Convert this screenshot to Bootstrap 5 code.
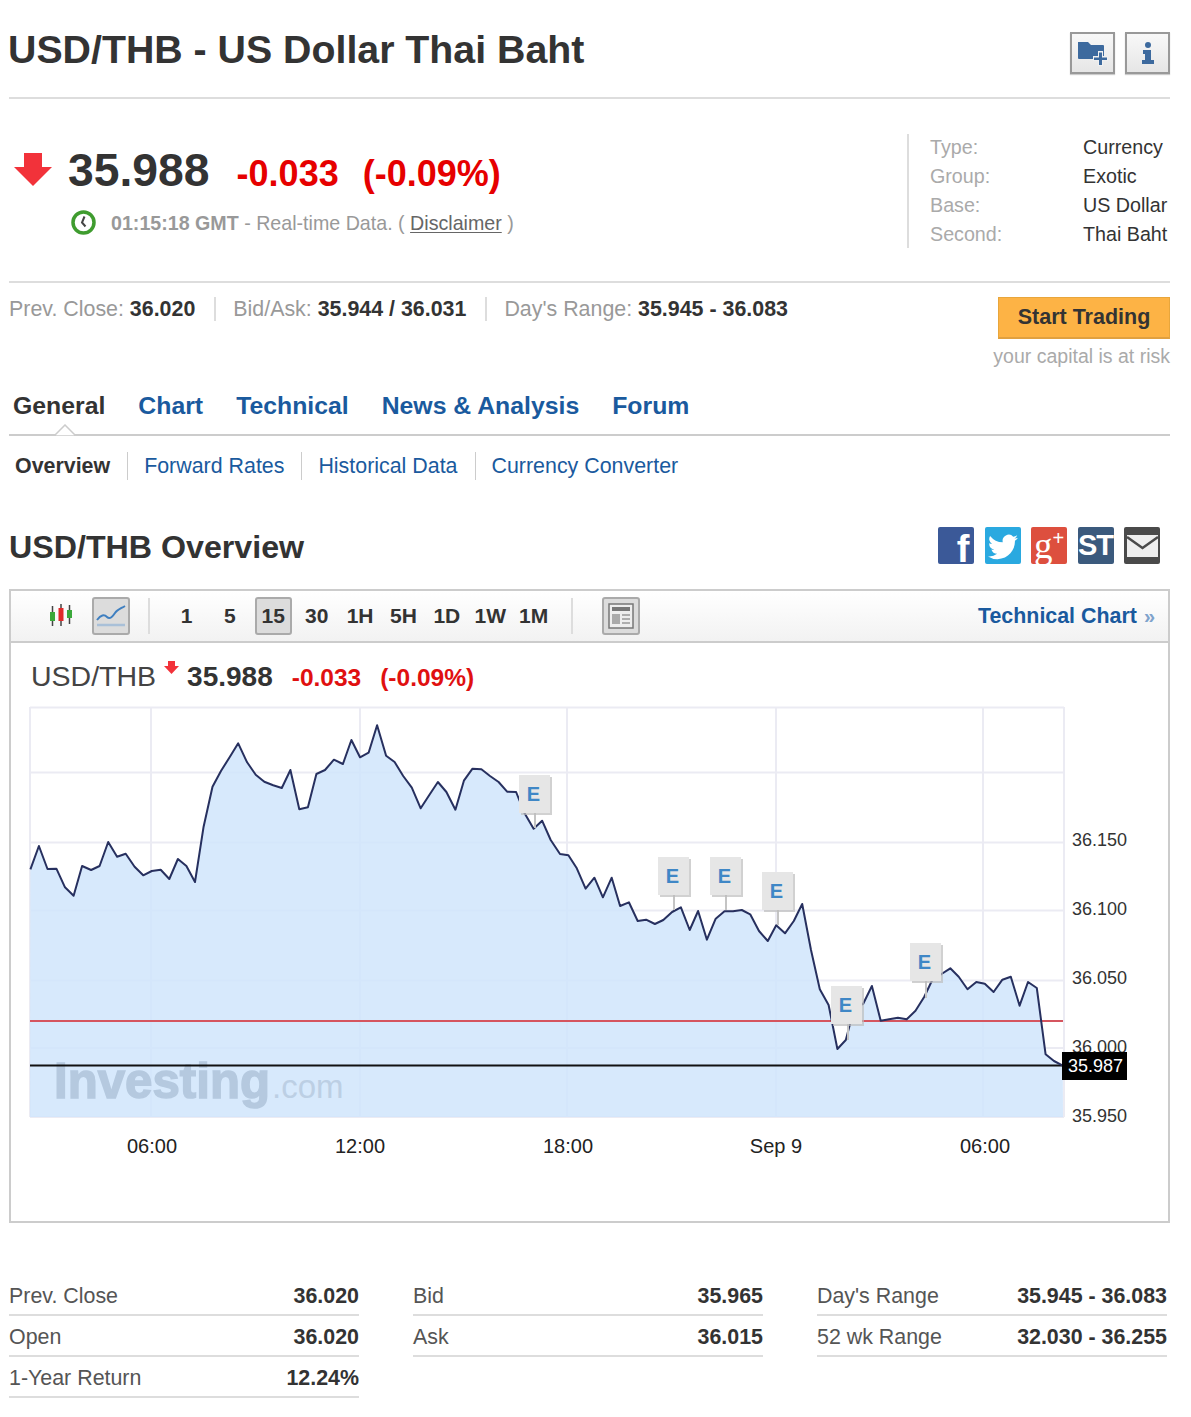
<!DOCTYPE html>
<html lang="en">
<head>
  <meta charset="UTF-8">
  <meta name="viewport" content="width=device-width, initial-scale=1.0">
  <title>USD/THB - US Dollar Thai Baht</title>
  <link href="https://cdn.jsdelivr.net/npm/bootstrap@5.3.3/dist/css/bootstrap.min.css" rel="stylesheet">
  <style>
    body { font-family: "Liberation Sans", Arial, sans-serif; color: #333; background: #fff; }
    a { text-decoration: none; }
    .pg { padding: 0 21px 0 9px; height: 1417px; overflow: hidden; }

    .head-row { height: 99px; border-bottom: 2px solid #ddd; }
    .head-row h1 { font-size: 39.3px; line-height: 46px; font-weight: 700; margin: 26px 0 0 -1px; color: #333; }
    .tool-btns { padding-top: 32px; gap: 10px; }
    .tool-btn { width: 45px; height: 42px; border: 2px solid #999; background: linear-gradient(#f8f8f8, #e6e6e6); display: flex; align-items: center; justify-content: center; box-shadow: 0 1px 1px #ccc; }

    .quote-row { height: 184px; border-bottom: 2px solid #ddd; }
    .down-arrow { margin: 54px 16px 0 5px; }
    .last-price { font-size: 46.3px; line-height: 54px; font-weight: 700; color: #333; }
    .chg { font-size: 36px; line-height: 40px; font-weight: 700; color: #e60000; margin-left: 27px; padding-top: 11px; gap: 24px; }
    .price-wrap { padding-top: 44px; }
    .time-line { font-size: 19.65px; line-height: 24px; color: #999; margin-top: 13px; gap: 15px; margin-left: 3px; }
    .time-line a { color: #666; text-decoration: underline; text-underline-offset: 2px; }
    .info-box { margin-top: 35px; height: 114px; border-left: 2px solid #ddd; margin-right: 1px; padding-left: 21px; width: 262px; display: grid; grid-template-columns: 153px 1fr; grid-auto-rows: 29px; font-size: 19.7px; line-height: 26px; color: #aaa; }
    .info-box b { font-weight: 400; color: #333; white-space: nowrap; }

    .stats-row { height: 85px; padding-top: 14px; }
    .stat-list { font-size: 21.4px; line-height: 25px; color: #999; }
    .stat-list span { padding-right: 19px; margin-right: 17px; border-right: 2px solid #ddd; }
    .stat-list span:last-child { border: 0; }
    .stat-list b { color: #333; }
    .trade-box { text-align: right; }
    .trade-btn { display: block; width: 172px; height: 42px; background: #fdb345; border: 1px solid #e8a63c; border-bottom: 2px solid #e0a040; color: #333; font-weight: 700; font-size: 21.5px; line-height: 38px; text-align: center; border-radius: 0; padding: 0; }
    .risk-note { font-size: 19.5px; line-height: 24px; color: #aaa; margin-top: 5px; white-space: nowrap; margin-left: -10px; }

    .main-tabs { height: 68px; border-bottom: 2px solid #ccc; padding-left: 4px; gap: 33px; font-size: 24.8px; font-weight: 700; line-height: 44px; position: relative; align-items: flex-end; padding-bottom: 6px; }
    .main-tabs a { color: #1a5a9e; }
    .main-tabs .on { color: #333; }
    .tab-caret { position: absolute; left: 45px; bottom: -2px; }
    .sub-tabs { padding: 16px 0 0 6px; font-size: 21.4px; line-height: 28px; }
    .sub-tabs a { color: #1a5a9e; padding-right: 17px; margin-right: 16px; border-right: 1px solid #ccc; }
    .sub-tabs a:last-child { border: 0; }
    .sub-tabs .on { color: #333; font-weight: 700; }

    .over-head { height: 109px; padding-top: 47px; }
    .over-head h2 { font-size: 32.2px; line-height: 40px; font-weight: 700; margin: 0; color: #333; }
    .share-btns { gap: 10.5px; padding-right: 10px; height: 37px; }
    .share-ico { width: 36px; height: 37px; border-radius: 2px; color: #fff; display: flex; align-items: center; justify-content: center; font-weight: 700; }
    .ico-f { background: #3b5998; font-size: 38px; line-height: 30px; padding: 7px 0 0 14px; }
    .ico-g { background: #dd4f3e; font-family: "Liberation Serif", serif; font-weight: 400; font-size: 37px; line-height: 30px; }
    .ico-g span { font-family: "Liberation Sans", sans-serif; font-size: 20px; line-height: 20px; align-self: flex-start; margin-top: 1px; }
    .ico-st { background: #3b5a7d; font-size: 29px; letter-spacing: -1px; }

    .chart-box { border: 2px solid #ccc; height: 634px; }
    .chart-bar { height: 52px; border-bottom: 2px solid #ccc; background: linear-gradient(#fff, #f2f2f2); position: relative; padding: 0 13px 0 0; font-size: 21px; font-weight: 700; color: #333; }
    .bar-left { padding-left: 37px; height: 100%; }
    .sq-btn { width: 38px; height: 38px; border: 2px solid #aaa; border-radius: 3px; background: #dcdcdc; display: flex; align-items: center; justify-content: center; }
    .bar-sep { width: 2px; height: 36px; background: #ddd; margin: 0 18px; }
    .bar-sep.sep-end { margin: 0 29px 0 12px; }
    .tf { width: 37px; height: 38px; margin-right: 6.4px; line-height: 34px; text-align: center; border: 2px solid transparent; border-radius: 3px; }
    .tf.on { background: #dcdcdc; border-color: #aaa; }
    .tech-link { color: #1a5a9e; font-size: 21.4px; }
    .tech-link i { font-style: normal; color: #7fa3cc; margin-left: 7px; font-size: 20px; line-height: 20px; }

    .chart-title { height: 61px; padding: 13px 0 0 20px; align-items: baseline; }
    .chart-title .nm { font-size: 28.5px; line-height: 38px; color: #444; }
    .chart-title .px { font-size: 28px; font-weight: 700; color: #333; margin-left: 31px; position: relative; }
    .chart-title .ch { font-size: 24.5px; font-weight: 700; color: #e01010; margin-left: 19px; }
    .mini-arrow { position: absolute; left: -23px; top: 5px; }
    .chart-svg { display: block; }
    .chart-svg text { font-family: "Liberation Sans", Arial, sans-serif; }

    .fig-cols { margin-top: 52px; gap: 54px; font-size: 21.4px; }
    .fig-col { width: 350px; }
    .fig-line { height: 41px; border-bottom: 2px solid #ddd; display: flex; justify-content: space-between; align-items: flex-end; padding-bottom: 5px; line-height: 26px; color: #555; }
    .fig-line b { color: #333; }
  </style>
</head>
<body>
<div class="pg">

  <!-- title -->
  <div class="head-row d-flex justify-content-between">
    <h1>USD/THB - US Dollar Thai Baht</h1>
    <div class="tool-btns d-flex">
      <div class="tool-btn">
        <svg width="32" height="26" viewBox="0 0 32 26"><path d="M1 2h10l3 3h12a1 1 0 0 1 1 1v13H2a1 1 0 0 1-1-1z" fill="#3d6a9e"/><path d="M21 11h5v5h5v5h-5v5h-5v-5h-5v-5h5z" fill="#f0f0f0"/><path d="M22 12.500h3v5h5v2.500h-5v5h-3v-5h-5v-2.500h5z" fill="#3d6a9e"/></svg>
      </div>
      <div class="tool-btn">
        <svg width="12" height="22" viewBox="0 0 12 22"><circle cx="6" cy="3" r="3" fill="#3d6a9e"/><path d="M1 8h8v10h3v4H0v-4h3v-6H1z" fill="#3d6a9e"/></svg>
      </div>
    </div>
  </div>

  <!-- quote -->
  <div class="quote-row d-flex justify-content-between">
    <div class="d-flex">
      <svg class="down-arrow" width="38" height="33" viewBox="0 0 38 33"><path d="M10 0h18v14h10L19 33 0 14h10z" fill="#f2323a"/></svg>
      <div class="price-wrap">
        <div class="d-flex">
          <div class="last-price">35.988</div>
          <div class="chg d-flex"><span>-0.033</span><span>(-0.09%)</span></div>
        </div>
        <div class="time-line d-flex align-items-center">
          <svg width="25" height="25" viewBox="0 0 25 25"><circle cx="12.5" cy="12.5" r="10.5" fill="#fff" stroke="#3f9c2f" stroke-width="3.5"/><path d="M13.5 6.500l-2.500 6 3.500 4" fill="none" stroke="#444" stroke-width="2"/></svg>
          <div><b>01:15:18 GMT</b> - Real-time Data. ( <a href="#">Disclaimer</a> )</div>
        </div>
      </div>
    </div>
    <div class="info-box">
      <span>Type:</span><b>Currency</b>
      <span>Group:</span><b>Exotic</b>
      <span>Base:</span><b>US Dollar</b>
      <span>Second:</span><b>Thai Baht</b>
    </div>
  </div>

  <!-- stats strip -->
  <div class="stats-row d-flex justify-content-between">
    <div class="stat-list">
      <span>Prev. Close: <b>36.020</b></span><span>Bid/Ask: <b>35.944 / 36.031</b></span><span>Day's Range: <b>35.945 - 36.083</b></span>
    </div>
    <div class="trade-box">
      <a class="trade-btn btn" href="#">Start Trading</a>
      <div class="risk-note">your capital is at risk</div>
    </div>
  </div>

  <!-- tabs -->
  <div class="main-tabs d-flex">
    <a class="on" href="#">General</a>
    <a href="#">Chart</a>
    <a href="#">Technical</a>
    <a href="#">News &amp; Analysis</a>
    <a href="#">Forum</a>
    <svg class="tab-caret" width="22" height="12" viewBox="0 0 22 12"><path d="M0 12L11 1l11 11z" fill="#fff" stroke="#ccc" stroke-width="1.5"/></svg>
  </div>
  <div class="sub-tabs d-flex">
    <a class="on" href="#">Overview</a>
    <a href="#">Forward Rates</a>
    <a href="#">Historical Data</a>
    <a href="#">Currency Converter</a>
  </div>

  <!-- overview head -->
  <div class="over-head d-flex justify-content-between">
    <h2>USD/THB Overview</h2>
    <div class="share-btns d-flex">
      <div class="share-ico ico-f">f</div>
      <div class="share-ico" style="background:#2aa9e0">
        <svg width="30" height="30" viewBox="0 0 16 16"><path fill="#fff" d="M5.026 15c6.038 0 9.341-5.003 9.341-9.334 0-.14 0-.282-.006-.422A6.685 6.685 0 0 0 16 3.542a6.658 6.658 0 0 1-1.889.518 3.301 3.301 0 0 0 1.447-1.817 6.533 6.533 0 0 1-2.087.793A3.286 3.286 0 0 0 7.875 6.030a9.325 9.325 0 0 1-6.767-3.429 3.289 3.289 0 0 0 1.018 4.382A3.323 3.323 0 0 1 .64 6.575v.045a3.288 3.288 0 0 0 2.632 3.218 3.203 3.203 0 0 1-.865.115 3.230 3.230 0 0 1-.614-.057 3.283 3.283 0 0 0 3.067 2.277A6.588 6.588 0 0 1 .78 13.580a6.320 6.320 0 0 1-.78-.045A9.344 9.344 0 0 0 5.026 15z"/></svg>
      </div>
      <div class="share-ico ico-g">g<span>+</span></div>
      <div class="share-ico ico-st">ST</div>
      <div class="share-ico" style="background:#4a4a4a">
        <svg width="31" height="22" viewBox="0 0 31 22"><rect width="31" height="22" fill="#eee"/><path d="M0 2l15.500 11L31 2" fill="none" stroke="#4a4a4a" stroke-width="2.5"/></svg>
      </div>
    </div>
  </div>

  <!-- chart -->
  <div class="chart-box">
    <div class="chart-bar d-flex justify-content-between align-items-center">
      <div class="bar-left d-flex align-items-center">
        <svg width="26" height="24" viewBox="0 0 26 24" style="margin-right:18px">
          <path d="M4.500 2v20M13 0v22M21.500 1v19" stroke="#444" stroke-width="1.5"/>
          <rect x="2" y="8" width="5" height="9" fill="#3aa83a"/><rect x="10.500" y="4" width="5" height="13" fill="#e02a2a"/><rect x="19" y="6" width="5" height="8" fill="#3aa83a"/>
        </svg>
        <div class="sq-btn">
          <svg width="32" height="26" viewBox="0 0 32 26"><path d="M2 17c4-5 7-6 10-3s6-1 8-4 5-4 10-7" fill="none" stroke="#3f7fc0" stroke-width="2"/><path d="M2 22h28" stroke="#a9c0d8" stroke-width="2.5"/></svg>
        </div>
        <div class="bar-sep"></div>
        <div class="tf">1</div><div class="tf">5</div><div class="tf on">15</div><div class="tf">30</div><div class="tf">1H</div><div class="tf">5H</div><div class="tf">1D</div><div class="tf">1W</div><div class="tf">1M</div>
        <div class="bar-sep sep-end"></div>
        <div class="sq-btn">
          <svg width="26" height="26" viewBox="0 0 26 26"><rect x="1" y="1" width="24" height="24" fill="#eee" stroke="#777" stroke-width="1.5"/><rect x="4" y="4" width="18" height="4" fill="#777"/><rect x="4" y="11" width="8" height="10" fill="#aaa"/><path d="M14 12h8M14 16h8M14 20h8" stroke="#999" stroke-width="1.5"/></svg>
        </div>
      </div>
      <a class="tech-link" href="#">Technical Chart<i>»</i></a>
    </div>

    <div class="chart-title d-flex">
      <span class="nm">USD/THB</span>
      <span class="px"><svg class="mini-arrow" width="15" height="13" viewBox="0 0 15 13"><path d="M4 0h7v5h4l-7.500 8L0 5h4z" fill="#f2323a"/></svg>35.988</span>
      <span class="ch">-0.033</span>
      <span class="ch">(-0.09%)</span>
    </div>

    <!-- viewBox is in page coordinates -->
    <svg id="chart" class="chart-svg" width="1157" height="518" viewBox="11 704 1157 518">
      <g stroke="#ebebf3" stroke-width="2" fill="none">
        <path d="M30 707.500H1064M30 772.500H1064M30 842.500H1064M30 910.500H1064M30 980.500H1064M30 1048H1064M30 1117H1064"/>
        <path d="M30 707V1117M151 707V1117M360 707V1117M567 707V1117M776 707V1117M983 707V1117M1064 707V1117"/>
      </g>
      <path id="area" fill="#d0e5fc" fill-opacity=".85"/>
      <text x="54" y="1098" font-size="50" font-weight="700" fill="#b5c9df" stroke="#b5c9df" stroke-width="1.500" textLength="216" lengthAdjust="spacingAndGlyphs">Investing</text>
      <text x="272" y="1098" font-size="33" fill="#bccfe4">.com</text>
      <path d="M30 1021H1063" stroke="#d5555f" stroke-width="2"/>
      <path d="M30 1065.500H1063" stroke="#111" stroke-width="2"/>
      <polyline id="line" fill="none" stroke="#27305f" stroke-width="2" stroke-linejoin="round"/>
      <g id="events"></g>
      <g font-size="18" fill="#333">
        <text x="1072" y="846">36.150</text>
        <text x="1072" y="915">36.100</text>
        <text x="1072" y="984">36.050</text>
        <text x="1072" y="1053">36.000</text>
        <text x="1072" y="1122">35.950</text>
      </g>
      <rect x="1062" y="1052" width="65" height="28" fill="#000"/>
      <text x="1068" y="1072" font-size="18" fill="#fff">35.987</text>
      <g font-size="20" fill="#222" text-anchor="middle">
        <text x="152" y="1153">06:00</text>
        <text x="360" y="1153">12:00</text>
        <text x="568" y="1153">18:00</text>
        <text x="776" y="1153">Sep 9</text>
        <text x="985" y="1153">06:00</text>
      </g>
    </svg>
  </div>

  <!-- key figures -->
  <div class="fig-cols d-flex">
    <div class="fig-col">
      <div class="fig-line"><span>Prev. Close</span><b>36.020</b></div>
      <div class="fig-line"><span>Open</span><b>36.020</b></div>
      <div class="fig-line"><span>1-Year Return</span><b>12.24%</b></div>
    </div>
    <div class="fig-col">
      <div class="fig-line"><span>Bid</span><b>35.965</b></div>
      <div class="fig-line"><span>Ask</span><b>36.015</b></div>
    </div>
    <div class="fig-col">
      <div class="fig-line"><span>Day's Range</span><b>35.945 - 36.083</b></div>
      <div class="fig-line"><span>52 wk Range</span><b>32.030 - 36.255</b></div>
    </div>
  </div>
</div>

<script>
  // price series, read off the chart: [x, y] in crop units
  const partA = [85,508,109,438,133,507,158,506,182,562,206,587,230,498,255,510,279,498,303,426,328,470,352,461,377,500,401,526,425,513,450,509,474,537,498,477,522,498,546,546,570,380,595,260,619,212,643,172,667,130,692,187,716,224,740,245,765,256,789,264,813,210,838,328,862,322,886,222,910,210,935,179,960,192,984,120,1008,172,1032,158,1056,76,1081,167,1105,186,1129,228,1153,263,1178,325,1202,285,1226,246,1250,276,1275,329,1299,242,1323,206,1348,208,1372,228,1396,246,1420,275,1445,276,1469,340,1494,386,1518,362,1542,420];
  const partB = [0,462,22,466,44,505,67,566,90,533,112,592,135,533,157,618,180,607,203,663,225,659,248,672,270,660,293,636,316,622,339,690,361,633,384,719,407,656,430,634,452,634,475,630,497,643,520,693,543,723,565,676,588,700,611,663,633,612,656,750,679,868,702,915,725,1047,747,1020,770,920,792,912,815,858,838,962,860,958,883,953,906,958,929,932,952,890,975,835,997,822,1020,805,1042,830,1065,868,1088,846,1110,851,1133,876,1156,839,1178,830,1201,917,1223,846,1246,864,1269,1063,1291,1083,1314,1097];

  const pts = [];
  for (let i = 0; i < partA.length; i += 2) pts.push([partA[i] / 2.8, 700 + partA[i + 1] / 3]);
  for (let i = 0; i < partB.length; i += 2) pts.push([560 + partB[i] / 2.6133, 700 + partB[i + 1] / 3]);

  const str = pts.map(p => p[0].toFixed(1) + ',' + p[1].toFixed(1)).join(' ');
  document.getElementById('line').setAttribute('points', str);
  document.getElementById('area').setAttribute('d', 'M30 1117L' + str.replace(/ /g, 'L') + 'L1063 1117Z');

  // event flags: box left, top, stem x, stem end
  const flags = [[519,775,535,828],[658,857,674,910],[710,857,726,910],[762,872,778,925],[831,986,848,1040],[910,943,926,998]];
  document.getElementById('events').innerHTML = flags.map(f => `
    <path d="M${f[2]} ${f[1] + 38}V${f[3]}" stroke="#c4c4c4" stroke-width="2"/>
    <rect x="${f[0] + 2}" y="${f[1] + 2}" width="31" height="38" fill="#bdbdbd" opacity=".7"/>
    <rect x="${f[0]}" y="${f[1]}" width="31" height="38" fill="#e6e6e6"/>
    <text x="${f[0] + 14.5}" y="${f[1] + 26}" font-size="20" font-weight="700" fill="#3f87c6" text-anchor="middle">E</text>`).join('');
</script>
<script src="https://cdn.jsdelivr.net/npm/bootstrap@5.3.3/dist/js/bootstrap.bundle.min.js"></script>
</body>
</html>
